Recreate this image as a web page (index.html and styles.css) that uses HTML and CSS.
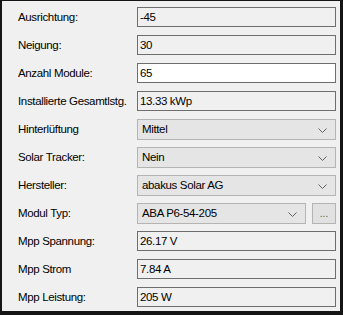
FILE: index.html
```html
<!DOCTYPE html>
<html>
<head>
<title>Modul</title>
<link rel="stylesheet" href="styles.css">
</head>
<body>
<div class="panel">
  <div class="row"><span class="lbl">Ausrichtung:</span><div class="box">-45</div></div>
  <div class="row"><span class="lbl">Neigung:</span><div class="box">30</div></div>
  <div class="row"><span class="lbl">Anzahl Module:</span><div class="box edit">65</div></div>
  <div class="row"><span class="lbl">Installierte Gesamtlstg.</span><div class="box">13.33 kWp</div></div>
  <div class="row"><span class="lbl">Hinterlüftung</span><div class="combo">Mittel<svg class="chev" width="9" height="5"><polyline points="0.5,0.5 4.5,4.5 8.5,0.5" /></svg></div></div>
  <div class="row"><span class="lbl">Solar Tracker:</span><div class="combo">Nein<svg class="chev" width="9" height="5"><polyline points="0.5,0.5 4.5,4.5 8.5,0.5" /></svg></div></div>
  <div class="row"><span class="lbl">Hersteller:</span><div class="combo">abakus Solar AG<svg class="chev" width="9" height="5"><polyline points="0.5,0.5 4.5,4.5 8.5,0.5" /></svg></div></div>
  <div class="row"><span class="lbl">Modul Typ:</span>
    <div class="split"><div class="combo">ABA P6-54-205<svg class="chev" width="9" height="5"><polyline points="0.5,0.5 4.5,4.5 8.5,0.5" /></svg></div><div class="more">...</div></div>
  </div>
  <div class="row"><span class="lbl">Mpp Spannung:</span><div class="box">26.17 V</div></div>
  <div class="row"><span class="lbl">Mpp Strom</span><div class="box">7.84 A</div></div>
  <div class="row"><span class="lbl">Mpp Leistung:</span><div class="box">205 W</div></div>
</div>
</body>
</html>
```

FILE: styles.css
```css
* {box-sizing: border-box}
html, body {
  margin: 0; padding: 0;
}
body {
  width: 343px;
  height: 315px;
  background: #f0f0f0;
  font-family: "Liberation Sans", Arial, sans-serif;
  font-size: 11.5px;
  letter-spacing: -0.35px;
  color: #000;
  overflow: hidden;
}
.panel {
  width: 343px;
  height: 315px;
  border-style: solid;
  border-color: #151515;
  border-width: 1px 3px 4px 2px;
  padding: 6px 4px 0 16px;
  display: flex;
  flex-direction: column;
  gap: 8px;
}
.row {
  display: flex;
  align-items: center;
  height: 20px;
}
.lbl {
  width: 119px;
  flex: none;
  white-space: nowrap;
}
.box {
  width: 199px;
  height: 20px;
  border: 1px solid #6e6e6e;
  background: #f0f0f0;
  padding: 0 2px;
  line-height: 18px;
}
.box.edit {
  background: #fff;
}
.combo {
  position: relative;
  width: 199px;
  height: 21px;
  border: 1px solid #b4b4b4;
  background: #e5e5e5;
  padding: 0 4px;
  line-height: 19px;
  flex: none;
}
.chev {
  position: absolute;
  right: 8px;
  top: 8px;
  fill: none;
  stroke: #606060;
  stroke-width: 1;
}
.split {
  display: flex;
  gap: 6px;
  width: 199px;
}
.split .combo {
  width: 169px;
}
.more {
  width: 24px;
  height: 21px;
  border: 1px solid #b4b4b4;
  background: #e1e1e1;
  color: #555;
  text-align: center;
  line-height: 19px;
  font-size: 10px;
  letter-spacing: 0;
}
```
